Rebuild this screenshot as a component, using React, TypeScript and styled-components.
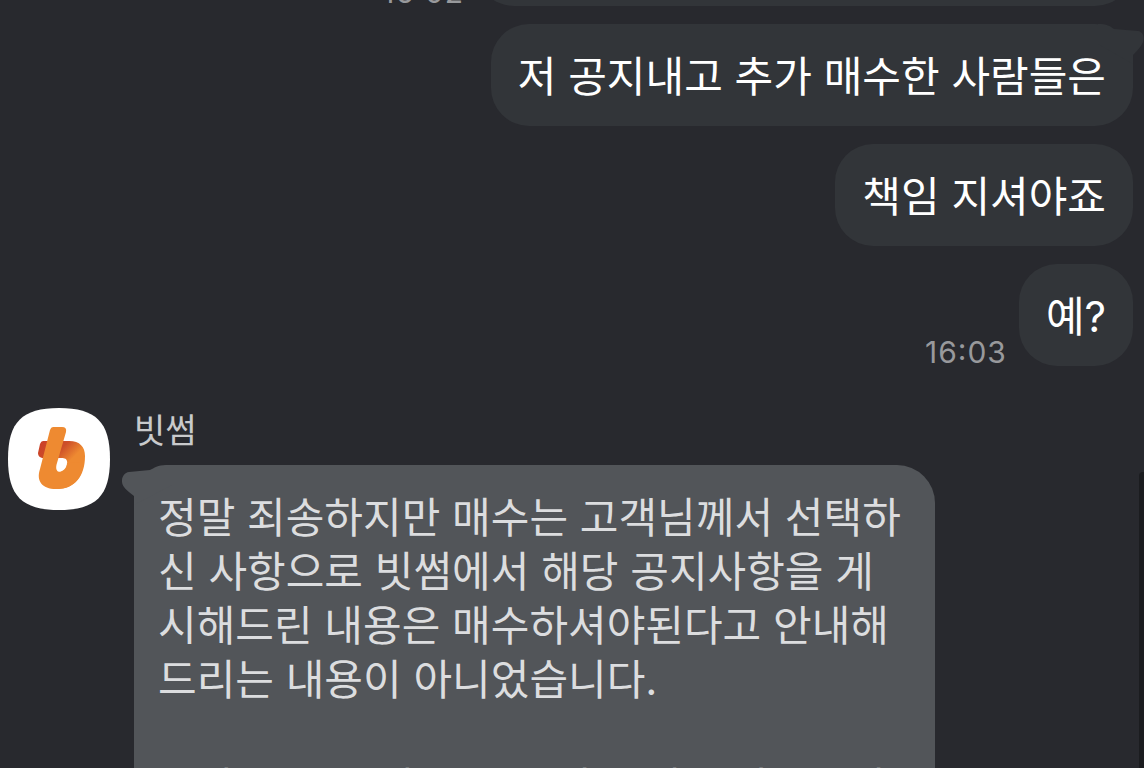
import React from "react";
import styled, { createGlobalStyle, css } from "styled-components";

const GlobalStyle = createGlobalStyle`
  * { box-sizing: border-box; }
  body {
    margin: 0;
    background: #28292e;
    font-family: Inter, "Noto Sans CJK KR", sans-serif;
  }
  p, ol { margin: 0; padding: 0; }
`;

const Chat = styled.main`
  position: relative;
  height: 100vh;
  overflow: hidden;
  background: #28292e;
`;

const Thread = styled.ol`
  display: flex;
  flex-direction: column;
  gap: 18px;
  margin-top: -96px;
  padding: 0 11px 0 8px;
  list-style: none;
`;

const SentRow = styled.li`
  display: flex;
  justify-content: flex-end;
  align-items: flex-end;
  gap: 12px;
`;

const Time = styled.time`
  color: #98999c;
  font-size: 30px;
  line-height: 28px;
  letter-spacing: 1px;
  font-feature-settings: "case" 1;
`;

const bubble = css`
  position: relative;
  font-size: 42px;
`;

const SentBubble = styled.p<{ $wide?: boolean }>`
  ${bubble}
  min-width: ${(p) => (p.$wide ? "657px" : "0")};
  padding: 26px 27px 22px;
  border-radius: 38px;
  background: #323539;
  color: #ffffff;
  line-height: 54px;
  white-space: nowrap;
`;

const SentTail = styled.svg`
  position: absolute;
  top: 0;
  right: -11px;
  width: 46px;
  height: 40px;
`;

const ReceivedRow = styled.li`
  display: flex;
  align-items: flex-start;
  gap: 24px;
  margin-top: 24px;
`;

const Avatar = styled.svg`
  flex: none;
  width: 102px;
  height: 102px;
`;

const ReceivedBody = styled.div`
  display: flex;
  flex-direction: column;
  align-items: flex-start;
  gap: 11px;
`;

const Sender = styled.p`
  color: #c9cacc;
  font-size: 34px;
  line-height: 46px;
`;

const ReceivedBubble = styled.p`
  ${bubble}
  width: 801px;
  padding: 26px 24px;
  border-radius: 38px;
  background: #525559;
  color: #dcdddf;
  line-height: 54px;
  white-space: pre-line;
`;

const ReceivedTail = styled.svg`
  position: absolute;
  top: 0;
  left: -12px;
  width: 50px;
  height: 40px;
`;

const EdgePanel = styled.div`
  position: absolute;
  top: 472px;
  right: 0;
  bottom: 0;
  width: 5px;
  border-top-left-radius: 4px;
  background: #1b1c1f;
`;

const reply = `정말 죄송하지만 매수는 고객님께서 선택하
신 사항으로 빗썸에서 해당 공지사항을 게
시해드린 내용은 매수하셔야된다고 안내해
드리는 내용이 아니었습니다.

투자 유의 안내를 드린 점 양해 부탁드립니`;

function BithumbAvatar() {
  return (
    <Avatar viewBox="0 0 102 102" role="img" aria-label="빗썸">
      <defs>
        <linearGradient id="fold" x1="36" y1="34" x2="66" y2="64" gradientUnits="userSpaceOnUse">
          <stop offset="0" stopColor="#cb4328" />
          <stop offset="0.4" stopColor="#cd4f29" />
          <stop offset="0.75" stopColor="#ee8a31" />
        </linearGradient>
      </defs>
      <path d="M51 0C88 0 102 14 102 51S88 102 51 102 0 88 0 51 14 0 51 0Z" fill="#fff" />
      <path
        d="M35 33H61C72 33 77 39 77 48C77 68 67 81 49 81L50 64C57 64 60 57 59 53C58 50 56 50 52 50H36C32 50 30 48 30 45L32 36Q33 33 35 33Z"
        fill="url(#fold)"
      />
      <path
        d="M45 19H54Q59 19 58 24L49 55C47 61 49 64 52 64C56 64 59 60 59 55L76 54C74 71 65 81 48 81C34 81 28 73 32 61L42 22Q43 19 45 19Z"
        fill="#ee8a31"
      />
    </Avatar>
  );
}

export default function App() {
  return (
    <>
      <GlobalStyle />
      <Chat>
        <Thread>
          <SentRow>
            <Time>16:02</Time>
            <SentBubble $wide>&nbsp;</SentBubble>
          </SentRow>
          <SentRow>
            <SentBubble>
              저 공지내고 추가 매수한 사람들은
              <SentTail viewBox="0 0 46 40" aria-hidden="true">
                <path d="M0 0C9 0 12 2 16 5L40 7C46 8 47 15 44 20Q43 23 35 31V40L0 20Z" fill="#323539" />
              </SentTail>
            </SentBubble>
          </SentRow>
          <SentRow>
            <SentBubble>책임 지셔야죠</SentBubble>
          </SentRow>
          <SentRow>
            <Time>16:03</Time>
            <SentBubble>예?</SentBubble>
          </SentRow>
          <ReceivedRow>
            <BithumbAvatar />
            <ReceivedBody>
              <Sender>빗썸</Sender>
              <ReceivedBubble>
                <ReceivedTail viewBox="0 0 50 40" aria-hidden="true">
                  <path d="M50 0H44C36 0 32 3 28 5L7 7C0 8 -2 17 2 22Q4 25 12 31V40L50 20Z" fill="#525559" />
                </ReceivedTail>
                {reply}
              </ReceivedBubble>
            </ReceivedBody>
          </ReceivedRow>
        </Thread>
        <EdgePanel />
      </Chat>
    </>
  );
}
